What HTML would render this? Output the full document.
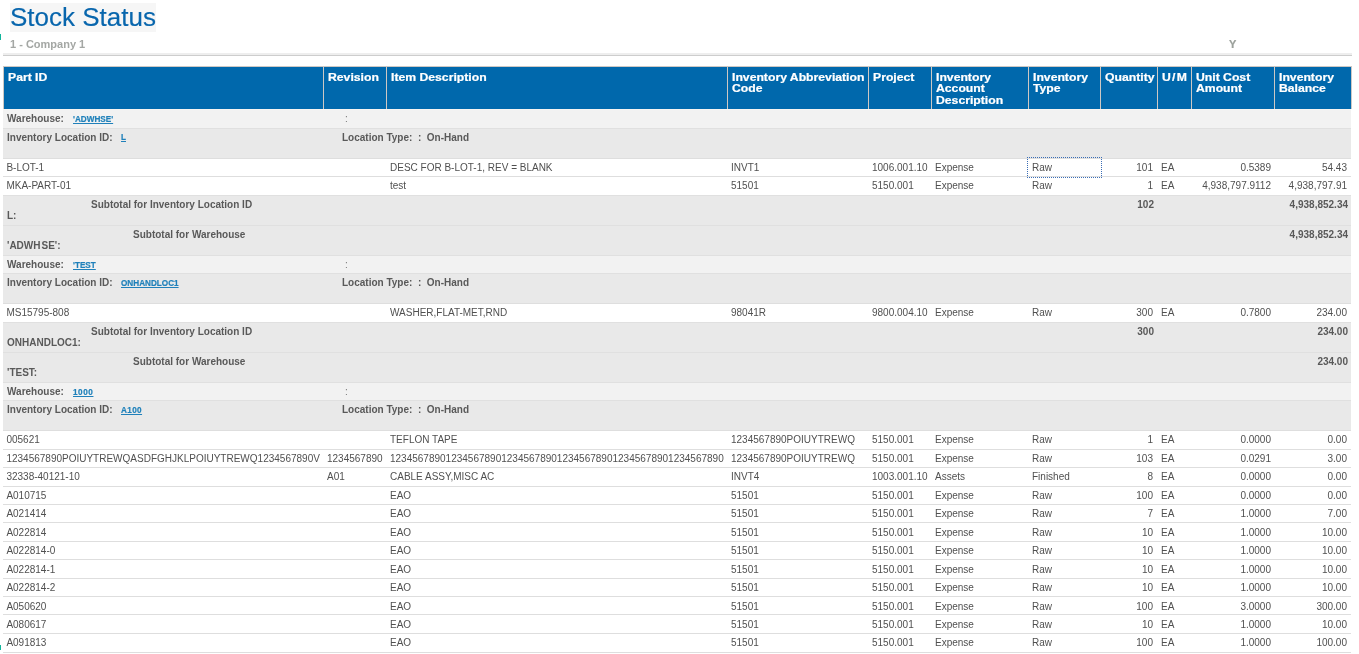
<!DOCTYPE html><html><head><meta charset="utf-8"><style>
*{margin:0;padding:0;box-sizing:border-box}
html,body{width:1359px;height:654px;overflow:hidden;background:#fff}
body{position:relative;font-family:"Liberation Sans",sans-serif;}
.a{position:absolute;white-space:pre}
.t{position:absolute;white-space:pre;font-size:10px;line-height:12px;height:12px;color:#505050}
.r{text-align:right}
.b{font-weight:bold;color:#595959}
.h{position:absolute;white-space:pre;font-size:10px;line-height:11.5px;color:#fff;font-weight:bold;transform:scaleX(1.22);transform-origin:0 0;-webkit-text-stroke:0.2px #fff}
.lk{position:absolute;white-space:pre;font-size:8.5px;line-height:10px;transform:scaleX(0.96);transform-origin:0 0;font-weight:bold;color:#1f80ba;text-decoration:underline;-webkit-text-stroke:0.2px #1f80ba}
.row{position:absolute;left:3px;width:1348px}
</style></head><body><div id="w" style="position:absolute;left:0;top:0;width:1359px;height:654px;will-change:transform">

<div class="a" style="left:10px;top:3px;width:146px;height:29px;background:#f6f6f6"></div>
<div class="a" style="left:10px;top:2px;font-size:26px;line-height:30px;color:#0866ad;-webkit-text-stroke:0.15px #0866ad">Stock Status</div>
<div class="a" style="left:10px;top:38px;font-size:11px;line-height:13px;font-weight:bold;color:#a4a7a4">1 - Company 1</div>
<div class="a" style="left:1229px;top:38px;font-size:11px;line-height:13px;font-weight:bold;color:#9ba09b;-webkit-text-stroke:0.2px #9ba09b">Y</div>
<div class="a" style="left:3px;top:53px;width:1349px;height:2px;background:#eeeeee"></div>
<div class="a" style="left:3px;top:55px;width:1349px;height:1px;background:#cdcdcd"></div>
<div class="a" style="left:0px;top:34px;width:1px;height:6px;background:#10b59b"></div>
<div class="a" style="left:0px;top:645px;width:1px;height:5px;background:#10b59b"></div>
<div class="a" style="left:3px;top:66px;width:1349px;height:43px;background:#0068ac"></div>
<div class="a" style="left:3px;top:66px;width:1349px;height:1px;background:#cdc8c4"></div>
<div class="a" style="left:3px;top:66px;width:1px;height:43px;background:#cdc8c4"></div>
<div class="a" style="left:323px;top:66px;width:1px;height:43px;background:#cdc8c4"></div>
<div class="a" style="left:386px;top:66px;width:1px;height:43px;background:#cdc8c4"></div>
<div class="a" style="left:727px;top:66px;width:1px;height:43px;background:#cdc8c4"></div>
<div class="a" style="left:868px;top:66px;width:1px;height:43px;background:#cdc8c4"></div>
<div class="a" style="left:931px;top:66px;width:1px;height:43px;background:#cdc8c4"></div>
<div class="a" style="left:1028px;top:66px;width:1px;height:43px;background:#cdc8c4"></div>
<div class="a" style="left:1100px;top:66px;width:1px;height:43px;background:#cdc8c4"></div>
<div class="a" style="left:1157px;top:66px;width:1px;height:43px;background:#cdc8c4"></div>
<div class="a" style="left:1191px;top:66px;width:1px;height:43px;background:#cdc8c4"></div>
<div class="a" style="left:1274px;top:66px;width:1px;height:43px;background:#cdc8c4"></div>
<div class="a" style="left:1351px;top:66px;width:1px;height:43px;background:#cdc8c4"></div>
<div class="h" style="left:8px;top:71.5px">Part ID</div>
<div class="h" style="left:328px;top:71.5px">Revision</div>
<div class="h" style="left:391px;top:71.5px">Item Description</div>
<div class="h" style="left:732px;top:71.5px">Inventory Abbreviation<br>Code</div>
<div class="h" style="left:873px;top:71.5px">Project</div>
<div class="h" style="left:936px;top:71.5px">Inventory<br>Account<br>Description</div>
<div class="h" style="left:1033px;top:71.5px">Inventory<br>Type</div>
<div class="h" style="left:1105px;top:71.5px">Quantity</div>
<div class="h" style="left:1162px;top:71.5px"><span style="letter-spacing:1px">U/M</span></div>
<div class="h" style="left:1196px;top:71.5px">Unit Cost<br>Amount</div>
<div class="h" style="left:1279px;top:71.5px">Inventory<br>Balance</div>
<div class="row" style="top:109px;height:19px;background:#f2f2f2;border-top:1px solid #f6f4f2"></div>
<div class="t b" style="left:7px;top:112.90px">Warehouse:</div>
<div class="lk" style="left:73px;top:113.90px">'ADWHSE'</div>
<div class="t" style="left:345px;top:112.90px;color:#777">:</div>
<div class="row" style="top:128px;height:30px;background:#e9e9e9;border-top:1px solid #e0e0e0"></div>
<div class="t b" style="left:7px;top:131.60px">Inventory Location ID:</div>
<div class="lk" style="left:121px;top:132.40px">L</div>
<div class="t b" style="left:342px;top:131.60px">Location Type:  :  On-Hand</div>
<div class="row" style="top:158px;height:18px;background:#fff;border-top:1px solid #dedede"></div>
<div class="t" style="left:6.40px;top:161.80px">B-LOT-1</div>
<div class="t" style="left:390.00px;top:161.80px">DESC FOR B-LOT-1, REV = BLANK</div>
<div class="t" style="left:731.00px;top:161.80px">INVT1</div>
<div class="t" style="left:872.00px;top:161.80px">1006.001.10</div>
<div class="t" style="left:935.00px;top:161.80px">Expense</div>
<div class="t" style="left:1032.00px;top:161.80px">Raw</div>
<div class="t r" style="left:1003px;width:150px;top:161.80px">101</div>
<div class="t" style="left:1161.00px;top:161.80px">EA</div>
<div class="t r" style="left:1121px;width:150px;top:161.80px">0.5389</div>
<div class="t r" style="left:1197px;width:150px;top:161.80px">54.43</div>
<div class="row" style="top:176px;height:19px;background:#fff;border-top:1px solid #dedede"></div>
<div class="t" style="left:6.40px;top:180.20px">MKA-PART-01</div>
<div class="t" style="left:390.00px;top:180.20px">test</div>
<div class="t" style="left:731.00px;top:180.20px">51501</div>
<div class="t" style="left:872.00px;top:180.20px">5150.001</div>
<div class="t" style="left:935.00px;top:180.20px">Expense</div>
<div class="t" style="left:1032.00px;top:180.20px">Raw</div>
<div class="t r" style="left:1003px;width:150px;top:180.20px">1</div>
<div class="t" style="left:1161.00px;top:180.20px">EA</div>
<div class="t r" style="left:1121px;width:150px;top:180.20px">4,938,797.9112</div>
<div class="t r" style="left:1197px;width:150px;top:180.20px">4,938,797.91</div>
<div class="row" style="top:195px;height:30px;background:#e9e9e9;border-top:1px solid #e0e0e0"></div>
<div class="t b" style="left:91px;top:198.80px">Subtotal for Inventory Location ID</div>
<div class="t b" style="left:7px;top:209.80px">L:</div>
<div class="t b r" style="left:1004px;width:150px;top:198.80px">102</div>
<div class="t b r" style="left:1198px;width:150px;top:198.80px">4,938,852.34</div>
<div class="row" style="top:225px;height:30px;background:#e9e9e9;border-top:1px solid #e0e0e0"></div>
<div class="t b" style="left:133px;top:229.00px">Subtotal for Warehouse</div>
<div class="t b" style="left:7px;top:240.00px">'ADWH<span style="margin-left:1px">SE</span>':</div>
<div class="t b r" style="left:1198px;width:150px;top:229.00px">4,938,852.34</div>
<div class="row" style="top:255px;height:18px;background:#f2f2f2;border-top:1px solid #e0e0e0"></div>
<div class="t b" style="left:7px;top:258.85px">Warehouse:</div>
<div class="lk" style="left:73px;top:259.85px">'TEST</div>
<div class="t" style="left:345px;top:258.85px;color:#777">:</div>
<div class="row" style="top:273px;height:30px;background:#e9e9e9;border-top:1px solid #e0e0e0"></div>
<div class="t b" style="left:7px;top:276.90px">Inventory Location ID:</div>
<div class="lk" style="left:121px;top:277.70px">ONHANDLOC1</div>
<div class="t b" style="left:342px;top:276.90px">Location Type:  :  On-Hand</div>
<div class="row" style="top:303px;height:19px;background:#fff;border-top:1px solid #dedede"></div>
<div class="t" style="left:6.40px;top:307.15px">MS15795-808</div>
<div class="t" style="left:390.00px;top:307.15px">WASHER,FLAT-MET,RND</div>
<div class="t" style="left:731.00px;top:307.15px">98041R</div>
<div class="t" style="left:872.00px;top:307.15px">9800.004.10</div>
<div class="t" style="left:935.00px;top:307.15px">Expense</div>
<div class="t" style="left:1032.00px;top:307.15px">Raw</div>
<div class="t r" style="left:1003px;width:150px;top:307.15px">300</div>
<div class="t" style="left:1161.00px;top:307.15px">EA</div>
<div class="t r" style="left:1121px;width:150px;top:307.15px">0.7800</div>
<div class="t r" style="left:1197px;width:150px;top:307.15px">234.00</div>
<div class="row" style="top:322px;height:30px;background:#e9e9e9;border-top:1px solid #e0e0e0"></div>
<div class="t b" style="left:91px;top:325.70px">Subtotal for Inventory Location ID</div>
<div class="t b" style="left:7px;top:336.70px">ONHANDLOC1:</div>
<div class="t b r" style="left:1004px;width:150px;top:325.70px">300</div>
<div class="t b r" style="left:1198px;width:150px;top:325.70px">234.00</div>
<div class="row" style="top:352px;height:30px;background:#e9e9e9;border-top:1px solid #e0e0e0"></div>
<div class="t b" style="left:133px;top:355.70px">Subtotal for Warehouse</div>
<div class="t b" style="left:7px;top:366.70px">'TEST:</div>
<div class="t b r" style="left:1198px;width:150px;top:355.70px">234.00</div>
<div class="row" style="top:382px;height:18px;background:#f2f2f2;border-top:1px solid #e0e0e0"></div>
<div class="t b" style="left:7px;top:385.80px">Warehouse:</div>
<div class="lk" style="left:73px;top:386.80px"><span style="letter-spacing:0.6px">1000</span></div>
<div class="t" style="left:345px;top:385.80px;color:#777">:</div>
<div class="row" style="top:400px;height:30px;background:#e9e9e9;border-top:1px solid #e0e0e0"></div>
<div class="t b" style="left:7px;top:403.80px">Inventory Location ID:</div>
<div class="lk" style="left:121px;top:404.60px"><span style="letter-spacing:0.4px">A100</span></div>
<div class="t b" style="left:342px;top:403.80px">Location Type:  :  On-Hand</div>
<div class="row" style="top:430px;height:19px;background:#fff;border-top:1px solid #dedede"></div>
<div class="t" style="left:6.40px;top:434.24px">005621</div>
<div class="t" style="left:390.00px;top:434.24px">TEFLON TAPE</div>
<div class="t" style="left:731.00px;top:434.24px">1234567890POIUYTREWQ</div>
<div class="t" style="left:872.00px;top:434.24px">5150.001</div>
<div class="t" style="left:935.00px;top:434.24px">Expense</div>
<div class="t" style="left:1032.00px;top:434.24px">Raw</div>
<div class="t r" style="left:1003px;width:150px;top:434.24px">1</div>
<div class="t" style="left:1161.00px;top:434.24px">EA</div>
<div class="t r" style="left:1121px;width:150px;top:434.24px">0.0000</div>
<div class="t r" style="left:1197px;width:150px;top:434.24px">0.00</div>
<div class="row" style="top:449px;height:18px;background:#fff;border-top:1px solid #dedede"></div>
<div class="t" style="left:6.40px;top:452.71px">1234567890POIUYTREWQASDFGHJKLPOIUYTREWQ1234567890V</div>
<div class="t" style="left:327.00px;top:452.71px">1234567890</div>
<div class="t" style="left:390.00px;top:452.71px">123456789012345678901234567890123456789012345678901234567890</div>
<div class="t" style="left:731.00px;top:452.71px">1234567890POIUYTREWQ</div>
<div class="t" style="left:872.00px;top:452.71px">5150.001</div>
<div class="t" style="left:935.00px;top:452.71px">Expense</div>
<div class="t" style="left:1032.00px;top:452.71px">Raw</div>
<div class="t r" style="left:1003px;width:150px;top:452.71px">103</div>
<div class="t" style="left:1161.00px;top:452.71px">EA</div>
<div class="t r" style="left:1121px;width:150px;top:452.71px">0.0291</div>
<div class="t r" style="left:1197px;width:150px;top:452.71px">3.00</div>
<div class="row" style="top:467px;height:19px;background:#fff;border-top:1px solid #dedede"></div>
<div class="t" style="left:6.40px;top:471.19px">32338-40121-10</div>
<div class="t" style="left:327.00px;top:471.19px">A01</div>
<div class="t" style="left:390.00px;top:471.19px">CABLE ASSY,MISC AC</div>
<div class="t" style="left:731.00px;top:471.19px">INVT4</div>
<div class="t" style="left:872.00px;top:471.19px">1003.001.10</div>
<div class="t" style="left:935.00px;top:471.19px">Assets</div>
<div class="t" style="left:1032.00px;top:471.19px">Finished</div>
<div class="t r" style="left:1003px;width:150px;top:471.19px">8</div>
<div class="t" style="left:1161.00px;top:471.19px">EA</div>
<div class="t r" style="left:1121px;width:150px;top:471.19px">0.0000</div>
<div class="t r" style="left:1197px;width:150px;top:471.19px">0.00</div>
<div class="row" style="top:486px;height:18px;background:#fff;border-top:1px solid #dedede"></div>
<div class="t" style="left:6.40px;top:489.66px">A010715</div>
<div class="t" style="left:390.00px;top:489.66px">EAO</div>
<div class="t" style="left:731.00px;top:489.66px">51501</div>
<div class="t" style="left:872.00px;top:489.66px">5150.001</div>
<div class="t" style="left:935.00px;top:489.66px">Expense</div>
<div class="t" style="left:1032.00px;top:489.66px">Raw</div>
<div class="t r" style="left:1003px;width:150px;top:489.66px">100</div>
<div class="t" style="left:1161.00px;top:489.66px">EA</div>
<div class="t r" style="left:1121px;width:150px;top:489.66px">0.0000</div>
<div class="t r" style="left:1197px;width:150px;top:489.66px">0.00</div>
<div class="row" style="top:504px;height:18px;background:#fff;border-top:1px solid #dedede"></div>
<div class="t" style="left:6.40px;top:508.14px">A021414</div>
<div class="t" style="left:390.00px;top:508.14px">EAO</div>
<div class="t" style="left:731.00px;top:508.14px">51501</div>
<div class="t" style="left:872.00px;top:508.14px">5150.001</div>
<div class="t" style="left:935.00px;top:508.14px">Expense</div>
<div class="t" style="left:1032.00px;top:508.14px">Raw</div>
<div class="t r" style="left:1003px;width:150px;top:508.14px">7</div>
<div class="t" style="left:1161.00px;top:508.14px">EA</div>
<div class="t r" style="left:1121px;width:150px;top:508.14px">1.0000</div>
<div class="t r" style="left:1197px;width:150px;top:508.14px">7.00</div>
<div class="row" style="top:522px;height:19px;background:#fff;border-top:1px solid #dedede"></div>
<div class="t" style="left:6.40px;top:526.62px">A022814</div>
<div class="t" style="left:390.00px;top:526.62px">EAO</div>
<div class="t" style="left:731.00px;top:526.62px">51501</div>
<div class="t" style="left:872.00px;top:526.62px">5150.001</div>
<div class="t" style="left:935.00px;top:526.62px">Expense</div>
<div class="t" style="left:1032.00px;top:526.62px">Raw</div>
<div class="t r" style="left:1003px;width:150px;top:526.62px">10</div>
<div class="t" style="left:1161.00px;top:526.62px">EA</div>
<div class="t r" style="left:1121px;width:150px;top:526.62px">1.0000</div>
<div class="t r" style="left:1197px;width:150px;top:526.62px">10.00</div>
<div class="row" style="top:541px;height:18px;background:#fff;border-top:1px solid #dedede"></div>
<div class="t" style="left:6.40px;top:545.09px">A022814-0</div>
<div class="t" style="left:390.00px;top:545.09px">EAO</div>
<div class="t" style="left:731.00px;top:545.09px">51501</div>
<div class="t" style="left:872.00px;top:545.09px">5150.001</div>
<div class="t" style="left:935.00px;top:545.09px">Expense</div>
<div class="t" style="left:1032.00px;top:545.09px">Raw</div>
<div class="t r" style="left:1003px;width:150px;top:545.09px">10</div>
<div class="t" style="left:1161.00px;top:545.09px">EA</div>
<div class="t r" style="left:1121px;width:150px;top:545.09px">1.0000</div>
<div class="t r" style="left:1197px;width:150px;top:545.09px">10.00</div>
<div class="row" style="top:559px;height:19px;background:#fff;border-top:1px solid #dedede"></div>
<div class="t" style="left:6.40px;top:563.56px">A022814-1</div>
<div class="t" style="left:390.00px;top:563.56px">EAO</div>
<div class="t" style="left:731.00px;top:563.56px">51501</div>
<div class="t" style="left:872.00px;top:563.56px">5150.001</div>
<div class="t" style="left:935.00px;top:563.56px">Expense</div>
<div class="t" style="left:1032.00px;top:563.56px">Raw</div>
<div class="t r" style="left:1003px;width:150px;top:563.56px">10</div>
<div class="t" style="left:1161.00px;top:563.56px">EA</div>
<div class="t r" style="left:1121px;width:150px;top:563.56px">1.0000</div>
<div class="t r" style="left:1197px;width:150px;top:563.56px">10.00</div>
<div class="row" style="top:578px;height:18px;background:#fff;border-top:1px solid #dedede"></div>
<div class="t" style="left:6.40px;top:582.04px">A022814-2</div>
<div class="t" style="left:390.00px;top:582.04px">EAO</div>
<div class="t" style="left:731.00px;top:582.04px">51501</div>
<div class="t" style="left:872.00px;top:582.04px">5150.001</div>
<div class="t" style="left:935.00px;top:582.04px">Expense</div>
<div class="t" style="left:1032.00px;top:582.04px">Raw</div>
<div class="t r" style="left:1003px;width:150px;top:582.04px">10</div>
<div class="t" style="left:1161.00px;top:582.04px">EA</div>
<div class="t r" style="left:1121px;width:150px;top:582.04px">1.0000</div>
<div class="t r" style="left:1197px;width:150px;top:582.04px">10.00</div>
<div class="row" style="top:596px;height:18px;background:#fff;border-top:1px solid #dedede"></div>
<div class="t" style="left:6.40px;top:600.51px">A050620</div>
<div class="t" style="left:390.00px;top:600.51px">EAO</div>
<div class="t" style="left:731.00px;top:600.51px">51501</div>
<div class="t" style="left:872.00px;top:600.51px">5150.001</div>
<div class="t" style="left:935.00px;top:600.51px">Expense</div>
<div class="t" style="left:1032.00px;top:600.51px">Raw</div>
<div class="t r" style="left:1003px;width:150px;top:600.51px">100</div>
<div class="t" style="left:1161.00px;top:600.51px">EA</div>
<div class="t r" style="left:1121px;width:150px;top:600.51px">3.0000</div>
<div class="t r" style="left:1197px;width:150px;top:600.51px">300.00</div>
<div class="row" style="top:614px;height:19px;background:#fff;border-top:1px solid #dedede"></div>
<div class="t" style="left:6.40px;top:618.99px">A080617</div>
<div class="t" style="left:390.00px;top:618.99px">EAO</div>
<div class="t" style="left:731.00px;top:618.99px">51501</div>
<div class="t" style="left:872.00px;top:618.99px">5150.001</div>
<div class="t" style="left:935.00px;top:618.99px">Expense</div>
<div class="t" style="left:1032.00px;top:618.99px">Raw</div>
<div class="t r" style="left:1003px;width:150px;top:618.99px">10</div>
<div class="t" style="left:1161.00px;top:618.99px">EA</div>
<div class="t r" style="left:1121px;width:150px;top:618.99px">1.0000</div>
<div class="t r" style="left:1197px;width:150px;top:618.99px">10.00</div>
<div class="row" style="top:633px;height:19px;background:#fff;border-top:1px solid #dedede"></div>
<div class="t" style="left:6.40px;top:637.47px">A091813</div>
<div class="t" style="left:390.00px;top:637.47px">EAO</div>
<div class="t" style="left:731.00px;top:637.47px">51501</div>
<div class="t" style="left:872.00px;top:637.47px">5150.001</div>
<div class="t" style="left:935.00px;top:637.47px">Expense</div>
<div class="t" style="left:1032.00px;top:637.47px">Raw</div>
<div class="t r" style="left:1003px;width:150px;top:637.47px">100</div>
<div class="t" style="left:1161.00px;top:637.47px">EA</div>
<div class="t r" style="left:1121px;width:150px;top:637.47px">1.0000</div>
<div class="t r" style="left:1197px;width:150px;top:637.47px">100.00</div>
<div class="a" style="left:3px;top:652px;width:1348px;height:1px;background:#dedede"></div>
<div class="a" style="left:1027px;top:157px;width:75px;height:21px;border:1px dotted #3a6db5"></div>
</div></body></html>
